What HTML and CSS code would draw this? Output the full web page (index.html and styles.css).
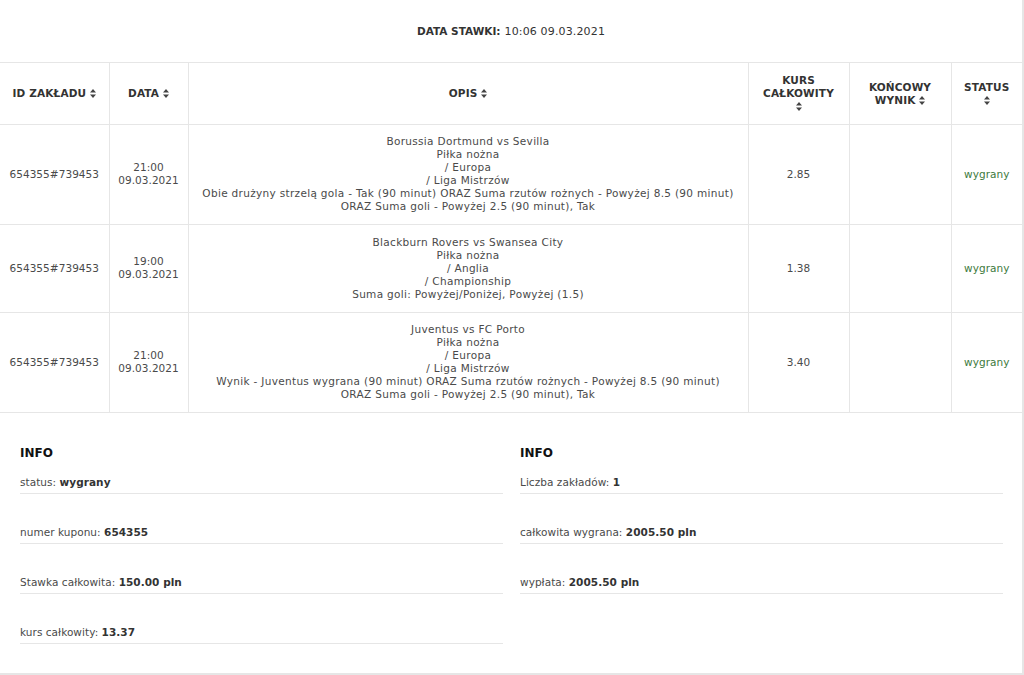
FILE: index.html
```html
<!DOCTYPE html>
<html lang="pl">
<head>
<meta charset="utf-8">
<title>Kupon</title>
<link rel="stylesheet" href="styles.css">
</head>
<body>
<div class="page">
  <div class="bet-date"><b>DATA STAWKI:</b> <span>10:06 09.03.2021</span></div>
  <table class="bets">
    <colgroup>
      <col class="c-id"><col class="c-date"><col class="c-desc"><col class="c-odds"><col class="c-result"><col class="c-status">
    </colgroup>
    <thead>
      <tr>
        <th>ID ZAKŁADU <svg class="sort" viewBox="0 0 6 9"><path d="M3 0L6 3.5H0Z M3 9L0 5.5H6Z"/></svg></th>
        <th>DATA <svg class="sort" viewBox="0 0 6 9"><path d="M3 0L6 3.5H0Z M3 9L0 5.5H6Z"/></svg></th>
        <th>OPIS <svg class="sort" viewBox="0 0 6 9"><path d="M3 0L6 3.5H0Z M3 9L0 5.5H6Z"/></svg></th>
        <th>KURS<br>CAŁKOWITY<br><svg class="sort" viewBox="0 0 6 9"><path d="M3 0L6 3.5H0Z M3 9L0 5.5H6Z"/></svg></th>
        <th>KOŃCOWY<br>WYNIK <svg class="sort" viewBox="0 0 6 9"><path d="M3 0L6 3.5H0Z M3 9L0 5.5H6Z"/></svg></th>
        <th>STATUS<br><svg class="sort" viewBox="0 0 6 9"><path d="M3 0L6 3.5H0Z M3 9L0 5.5H6Z"/></svg></th>
      </tr>
    </thead>
    <tbody>
      <tr class="r6">
        <td>654355#739453</td>
        <td>21:00<br>09.03.2021</td>
        <td class="desc">Borussia Dortmund vs Sevilla<br>Piłka nożna<br>/ Europa<br>/ Liga Mistrzów<br>Obie drużyny strzelą gola - Tak (90 minut) ORAZ Suma rzutów rożnych - Powyżej 8.5 (90 minut)<br>ORAZ Suma goli - Powyżej 2.5 (90 minut), Tak</td>
        <td>2.85</td>
        <td></td>
        <td class="won">wygrany</td>
      </tr>
      <tr class="r5">
        <td>654355#739453</td>
        <td>19:00<br>09.03.2021</td>
        <td class="desc">Blackburn Rovers vs Swansea City<br>Piłka nożna<br>/ Anglia<br>/ Championship<br>Suma goli: Powyżej/Poniżej, Powyżej (1.5)</td>
        <td>1.38</td>
        <td></td>
        <td class="won">wygrany</td>
      </tr>
      <tr class="r6">
        <td>654355#739453</td>
        <td>21:00<br>09.03.2021</td>
        <td class="desc">Juventus vs FC Porto<br>Piłka nożna<br>/ Europa<br>/ Liga Mistrzów<br>Wynik - Juventus wygrana (90 minut) ORAZ Suma rzutów rożnych - Powyżej 8.5 (90 minut)<br>ORAZ Suma goli - Powyżej 2.5 (90 minut), Tak</td>
        <td>3.40</td>
        <td></td>
        <td class="won">wygrany</td>
      </tr>
    </tbody>
  </table>
  <div class="info">
    <div class="info-col">
      <h3>INFO</h3>
      <div class="item">status: <b>wygrany</b></div>
      <div class="item">numer kuponu: <b>654355</b></div>
      <div class="item">Stawka całkowita: <b>150.00 pln</b></div>
      <div class="item">kurs całkowity: <b>13.37</b></div>
    </div>
    <div class="info-col">
      <h3>INFO</h3>
      <div class="item">Liczba zakładów: <b>1</b></div>
      <div class="item">całkowita wygrana: <b>2005.50 pln</b></div>
      <div class="item">wypłata: <b>2005.50 pln</b></div>
    </div>
  </div>
</div>
</body>
</html>
```

FILE: styles.css
```css
* { box-sizing: border-box; }
html, body { margin: 0; padding: 0; background: #fff; }
body {
  font-family: "DejaVu Sans", "Open Sans", sans-serif;
  font-size: 10.5px;
  line-height: 13px;
  letter-spacing: 0.05px;
  color: #4a4a4a;
}
.page {
  width: 1024px;
  height: 675px;
  border-right: 2px solid #e6e6e6;
  border-bottom: 2px solid #e6e6e6;
}
.bet-date {
  height: 62px;
  display: flex;
  align-items: center;
  justify-content: center;
  color: #333;
  font-size: 11px;
}
.bet-date b { font-weight: 700; font-size: 10.5px; margin-right: 4px; letter-spacing: 0; }
.bet-date span { letter-spacing: 0.15px; }
.bets {
  width: 1022px;
  border-collapse: collapse;
  table-layout: fixed;
}
.c-id { width: 109px; }
.c-date { width: 79px; }
.c-desc { width: 560px; }
.c-odds { width: 101px; }
.c-result { width: 102px; }
.c-status { width: 71px; }
.bets th, .bets td {
  border: 1px solid #e6e6e6;
  text-align: center;
  vertical-align: middle;
  padding: 0 2px;
}
.bets td { padding-bottom: 1px; }
.bets td.desc { letter-spacing: 0.32px; }
.bets tr > :first-child { border-left: 0; }
.bets tr > :last-child { border-right: 0; }
.bets th {
  height: 62px;
  font-weight: 700;
  font-size: 10.5px;
  letter-spacing: 0.15px;
  color: #333;
}
.sort { width: 6px; height: 9px; fill: #444; vertical-align: -1px; }
.r6 td { height: 100px; }
.r5 td { height: 88px; }
.won { color: #3d7a3d; }
.info {
  display: flex;
  gap: 17px;
  padding: 33px 19px 0 20px;
}
.info-col { flex: 1; }
.info h3 {
  margin: 0 0 16px;
  font-size: 12px;
  line-height: 14px;
  color: #111;
  font-weight: 700;
}
.item {
  padding-bottom: 4px;
  border-bottom: 1px solid #e6e6e6;
  margin-bottom: 32px;
}
.item b { color: #333; font-weight: 700; }
```
